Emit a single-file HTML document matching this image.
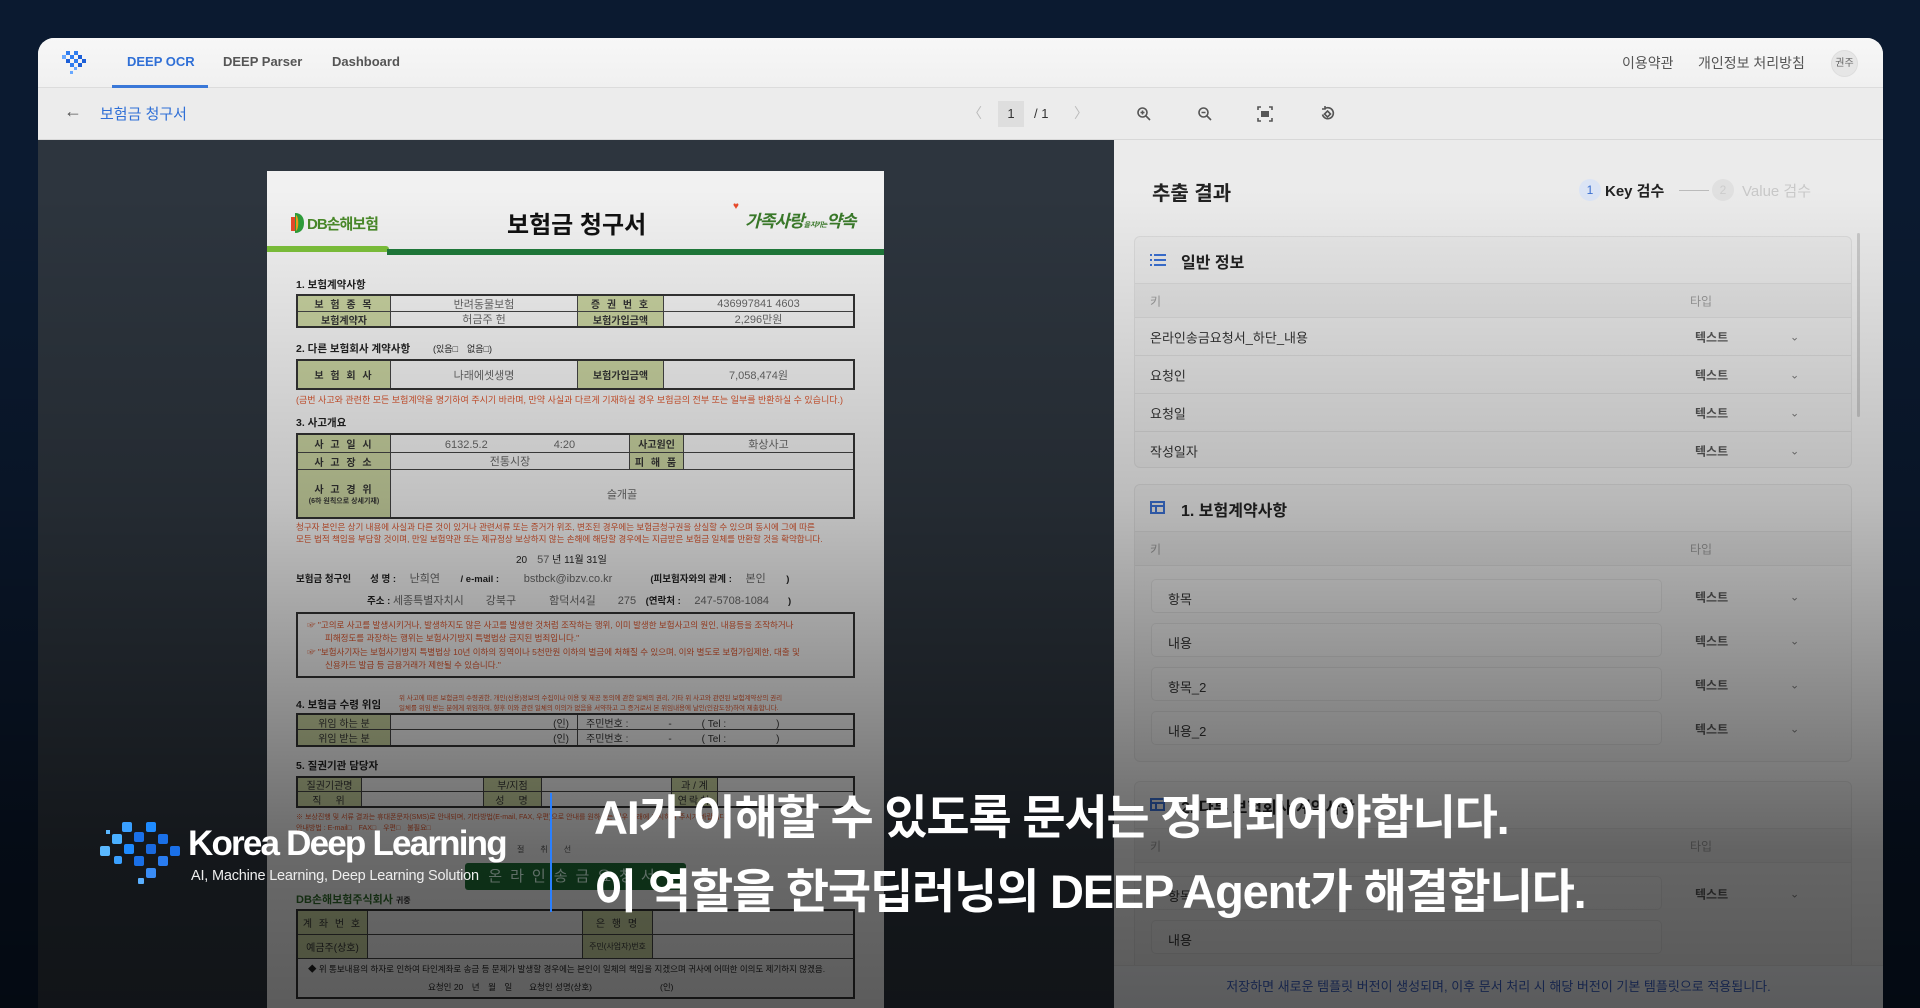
<!DOCTYPE html>
<html><head><meta charset="utf-8">
<style>
*{margin:0;padding:0;box-sizing:border-box}
html{overflow:hidden;height:1008px}
body{width:1920px;height:1008px;overflow:hidden;background:#0b1a30;font-family:"Liberation Sans","Noto Sans CJK KR",sans-serif;position:relative}
.abs{position:absolute}
.card{position:absolute;left:38px;top:38px;width:1845px;height:970px;background:#f3f3f3;border-radius:16px 16px 0 0;overflow:hidden}
.nav{position:absolute;left:0;top:0;width:100%;height:50px;border-bottom:1px solid #dcdcdc;background:linear-gradient(#f7f7f7,#f0f0f0)}
.nav .t{position:absolute;top:16px;font-size:13px;font-weight:bold;color:#555}
.tool{position:absolute;left:0;top:50px;width:100%;height:52px;background:#ececec;border-bottom:1px solid #d8d8d8}
.left{position:absolute;left:0;top:102px;width:1076px;height:868px;background:#2d353e;overflow:hidden}
.right{position:absolute;left:1076px;top:102px;width:769px;height:868px;background:#ebebeb;overflow:hidden}
.paper{position:absolute;left:229px;top:31px;width:617px;height:837px;background:#f1f1f1;overflow:hidden;color:#222}
.p{position:absolute;white-space:nowrap}
.sec{font-size:10.5px;font-weight:bold;color:#222}
.tbl{position:absolute;border:2px solid #333}
.c{position:absolute;border-right:1px solid #444;border-bottom:1px solid #444;font-size:10px;display:flex;align-items:center;justify-content:center;color:#333;white-space:nowrap}
.lb{background:#c7d19f;font-weight:bold;letter-spacing:2px}
.hw{color:#666;font-size:11px}
.red{color:#d9552e;font-size:9px}
.rc{position:absolute;left:20px;width:718px;background:#e7e7e7;border:1px solid #dadada;border-radius:6px;overflow:hidden}
.row{position:absolute;left:0;width:100%;border-top:1px solid #d8d8d8;font-size:13px;color:#333}
.row .k{position:absolute;left:15px;top:50%;transform:translateY(-50%)}
.row .ty{position:absolute;left:560px;top:50%;transform:translateY(-50%);font-size:12px;font-weight:bold;color:#555}
.row .ch{position:absolute;left:655px;top:50%;transform:translateY(-50%);font-size:11px;color:#777}
.inp{position:absolute;left:16px;width:511px;height:34px;border:1px solid #d9d9d9;border-radius:5px;background:#e9e9e9;font-size:13px;color:#333;padding:9px 0 0 16px}
.overlay{position:absolute;left:0;top:0;width:1920px;height:1008px;background:linear-gradient(to bottom,rgba(0,0,0,0) 0px,rgba(0,0,0,0) 190px,rgba(0,0,0,0.2) 500px,rgba(0,0,0,0.56) 850px,rgba(0,0,0,0.62) 1008px)}
.cap{position:absolute;color:#fff;font-weight:bold;white-space:nowrap;font-family:"Liberation Sans","Noto Sans CJK KR",sans-serif}
</style></head><body>
<div class="card">
  <div class="nav">
    <svg class="abs" style="left:22px;top:13px" width="30" height="26" viewBox="0 0 30 26">
      <g fill="#2f7df0"><rect x="6" y="0" width="4" height="4"/><rect x="14" y="0" width="4" height="4"/><rect x="2" y="4" width="4" height="4" fill="#68a8ff"/><rect x="10" y="4" width="4" height="4"/><rect x="18" y="4" width="4" height="4" fill="#1c5fd8"/><rect x="6" y="8" width="4" height="4" fill="#1c5fd8"/><rect x="14" y="8" width="4" height="4"/><rect x="22" y="8" width="4" height="4" fill="#1c5fd8"/><rect x="10" y="12" width="4" height="4"/><rect x="18" y="12" width="4" height="4" fill="#1c5fd8"/><rect x="14" y="16" width="3" height="3" fill="#68a8ff"/><rect x="10" y="20" width="3" height="3" fill="#68a8ff"/></g>
    </svg>
    <div class="t" style="left:89px;color:#2f6fd6">DEEP OCR</div>
    <div class="abs" style="left:74px;top:47px;width:96px;height:3px;background:#3a78d8"></div>
    <div class="t" style="left:185px">DEEP Parser</div>
    <div class="t" style="left:294px">Dashboard</div>
    <div class="t" style="left:1584px;font-weight:normal;color:#555;font-size:14px;top:15px">이용약관</div>
    <div class="t" style="left:1660px;font-weight:normal;color:#555;font-size:14px;top:15px">개인정보 처리방침</div>
    <div class="abs" style="left:1793px;top:12px;width:27px;height:27px;border-radius:50%;background:#e6e6e6;border:1px solid #ddd;font-size:10px;color:#666;text-align:center;line-height:25px">권주</div>
  </div>
  <div class="tool">
    <div class="abs" style="left:26px;top:13px;font-size:18px;color:#555">←</div>
    <div class="abs" style="left:62px;top:15px;font-size:15px;color:#2f6fd6">보험금 청구서</div>
    <div class="abs" style="left:930px;top:15px;font-size:14px;color:#bbb">〈</div>
    <div class="abs" style="left:960px;top:13px;width:26px;height:26px;background:#dedede;font-size:13px;color:#333;text-align:center;line-height:26px">1</div>
    <div class="abs" style="left:996px;top:18px;font-size:13px;color:#333">/ 1</div>
    <div class="abs" style="left:1036px;top:15px;font-size:14px;color:#bbb">〉</div>
    <svg class="abs" style="left:1098px;top:18px" width="16" height="16" viewBox="0 0 16 16" fill="none" stroke="#555" stroke-width="1.6"><circle cx="6.5" cy="6.5" r="4.5"/><path d="M10 10l4 4M4.5 6.5h4M6.5 4.5v4"/></svg>
    <svg class="abs" style="left:1159px;top:18px" width="16" height="16" viewBox="0 0 16 16" fill="none" stroke="#555" stroke-width="1.6"><circle cx="6.5" cy="6.5" r="4.5"/><path d="M10 10l4 4M4.5 6.5h4"/></svg>
    <svg class="abs" style="left:1219px;top:18px" width="16" height="16" viewBox="0 0 16 16" fill="none" stroke="#555" stroke-width="1.6"><path d="M1 4V1h3M12 1h3v3M15 12v3h-3M4 15H1v-3"/><rect x="4" y="5" width="8" height="6" fill="#555" stroke="none"/></svg>
    <svg class="abs" style="left:1281px;top:17px" width="17" height="17" viewBox="0 0 17 17" fill="none" stroke="#555" stroke-width="1.6"><path d="M6 3.5a5.5 5.5 0 1 1-2.5 6"/><path d="M6 1v3H3"/><path d="M8.5 6l3 3-3 3-3-3z"/></svg>
  </div>
  <div class="left">
    <div class="paper">
      <svg class="abs" style="left:24px;top:40px" width="14" height="24" viewBox="0 0 14 24"><path d="M0 6h5v14H0z" fill="#e84a2a"/><path d="M4 2c6 0 9 4 9 10s-3 10-9 10z" fill="#2e9e3a"/><path d="M5 4c3 2 3 14 0 16z" fill="#f59a1a"/></svg>
      <div class="p" style="left:40px;top:42px;font-size:15px;font-weight:bold;color:#4a8a2a;letter-spacing:-1px">DB손해보험</div>
      <div class="p" style="left:240px;top:34px;font-size:24px;font-weight:bold;color:#111">보험금 청구서</div>
      <div class="p" style="left:478px;top:36px;font-size:17px;font-weight:bold;color:#3a7a2a;font-style:italic;letter-spacing:-1px">가족사랑<span style="font-size:7px">을 지키는</span>약속</div>
      <div class="abs" style="left:466px;top:30px;color:#e84a2a;font-size:10px">♥</div>
      <div class="abs" style="left:0;top:75px;width:122px;height:6px;background:#7dc13a;border-radius:0 3px 3px 0"></div>
      <div class="abs" style="left:120px;top:78px;width:500px;height:6px;background:#1f7a3a"></div>

      <div class="p sec" style="left:29px;top:106px">1. 보험계약사항</div>
      <div class="tbl" style="left:29px;top:123px;width:559px;height:34px">
        <div class="c lb" style="left:0;top:0;width:93px;height:16px">보 험 종 목</div>
        <div class="c hw" style="left:93px;top:0;width:187px;height:16px">반려동물보험</div>
        <div class="c lb" style="left:280px;top:0;width:86px;height:16px">증 권 번 호</div>
        <div class="c hw" style="left:366px;top:0;width:189px;height:16px;border-right:0">436997841 4603</div>
        <div class="c lb" style="left:0;top:16px;width:93px;height:14px;border-bottom:0;letter-spacing:0">보험계약자</div>
        <div class="c hw" style="left:93px;top:16px;width:187px;height:14px;border-bottom:0">허금주 헌</div>
        <div class="c lb" style="left:280px;top:16px;width:86px;height:14px;border-bottom:0;letter-spacing:0">보험가입금액</div>
        <div class="c hw" style="left:366px;top:16px;width:189px;height:14px;border:0">2,296만원</div>
      </div>
      <div class="p sec" style="left:29px;top:170px">2. 다른 보험회사 계약사항 <span style="font-weight:normal;font-size:9px;margin-left:20px">(있음□　없음□)</span></div>
      <div class="tbl" style="left:29px;top:188px;width:559px;height:31px">
        <div class="c lb" style="left:0;top:0;width:93px;height:27px;border-bottom:0">보 험 회 사</div>
        <div class="c hw" style="left:93px;top:0;width:187px;height:27px;border-bottom:0">나래에셋생명</div>
        <div class="c lb" style="left:280px;top:0;width:86px;height:27px;border-bottom:0;letter-spacing:0">보험가입금액</div>
        <div class="c hw" style="left:366px;top:0;width:189px;height:27px;border:0">7,058,474원</div>
      </div>
      <div class="p red" style="left:29px;top:222px">(금번 사고와 관련한 모든 보험계약을 명기하여 주시기 바라며, 만약 사실과 다르게 기재하실 경우 보험금의 전부 또는 일부를 반환하실 수 있습니다.)</div>
      <div class="p sec" style="left:29px;top:244px">3. 사고개요</div>
      <div class="tbl" style="left:29px;top:262px;width:559px;height:86px">
        <div class="c lb" style="left:0;top:0;width:93px;height:18px">사 고 일 시</div>
        <div class="c hw" style="left:93px;top:0;width:239px;height:18px">6132.5.2　　　　　　4:20</div>
        <div class="c lb" style="left:332px;top:0;width:54px;height:18px;letter-spacing:0">사고원인</div>
        <div class="c hw" style="left:386px;top:0;width:169px;height:18px;border-right:0">화상사고</div>
        <div class="c lb" style="left:0;top:18px;width:93px;height:17px">사 고 장 소</div>
        <div class="c hw" style="left:93px;top:18px;width:239px;height:17px">전통시장</div>
        <div class="c lb" style="left:332px;top:18px;width:54px;height:17px">피 해 품</div>
        <div class="c" style="left:386px;top:18px;width:169px;height:17px;border-right:0"></div>
        <div class="c lb" style="left:0;top:35px;width:93px;height:47px;border-bottom:0;flex-direction:column">사 고 경 위<span style="font-size:7px;letter-spacing:0">(6하 원칙으로 상세기재)</span></div>
        <div class="c hw" style="left:93px;top:35px;width:462px;height:47px;border:0">슬개골</div>
      </div>
      <div class="p red" style="left:29px;top:350px;font-size:8.5px">청구자 본인은 상기 내용에 사실과 다른 것이 있거나 관련서류 또는 증거가 위조, 변조된 경우에는 보험금청구권을 상실할 수 있으며 동시에 그에 따른</div>
      <div class="p red" style="left:29px;top:362px;font-size:8.5px">모든 법적 책임을 부담할 것이며, 만일 보험약관 또는 제규정상 보상하지 않는 손해에 해당할 경우에는 지급받은 보험금 일체를 반환할 것을 확약합니다.</div>
      <div class="p" style="left:249px;top:380px;font-size:10px">20　<span class="hw">57</span> 년 11월 31일</div>
      <div class="p" style="left:29px;top:399px;font-size:9.5px;font-weight:bold">보험금 청구인　　성 명 : <span class="hw" style="font-weight:normal">　난희연　</span>　/ e-mail : <span class="hw" style="font-weight:normal">　　bstbck@ibzv.co.kr</span>　　　　(피보험자와의 관계 : <span class="hw" style="font-weight:normal">　본인　</span>　)</div>
      <div class="p" style="left:100px;top:421px;font-size:9.5px;font-weight:bold">주소 : <span class="hw" style="font-weight:normal">세종특별자치시　　강북구　　　함덕서4길　　275</span>　(연락처 : <span class="hw" style="font-weight:normal">　247-5708-1084</span>　　)</div>
      <div class="abs" style="left:29px;top:441px;width:559px;height:66px;border:2px solid #333"></div>
      <div class="p red" style="left:40px;top:448px;font-size:8.5px">☞ "고의로 사고를 발생시키거나, 발생하지도 않은 사고를 발생한 것처럼 조작하는 행위, 이미 발생한 보험사고의 원인, 내용등을 조작하거나</div>
      <div class="p red" style="left:58px;top:461px;font-size:8.5px">피해정도를 과장하는 행위는 보험사기방지 특별법상 금지된 범죄입니다."</div>
      <div class="p red" style="left:40px;top:475px;font-size:8.5px">☞ "보험사기자는 보험사기방지 특별법상 10년 이하의 징역이나 5천만원 이하의 벌금에 처해질 수 있으며, 이와 별도로 보험가입제한, 대출 및</div>
      <div class="p red" style="left:58px;top:488px;font-size:8.5px">신용카드 발급 등 금융거래가 제한될 수 있습니다."</div>
      <div class="p sec" style="left:29px;top:526px">4. 보험금 수령 위임</div>
      <div class="p red" style="left:132px;top:521px;font-size:6.5px">위 사고에 따른 보험금의 수령권한, 개인(신용)정보의 수집이나 이용 및 제공 동의에 관한 일체의 권리, 기타 위 사고와 관련된 보험계약상의 권리</div>
      <div class="p red" style="left:132px;top:531px;font-size:6.5px">일체를 위임 받는 분에게 위임하며, 향후 이와 관련 일체의 이의가 없음을 서약하고 그 증거로서 본 위임내용에 날인(인감도장)하여 제출합니다.</div>
      <div class="tbl" style="left:29px;top:542px;width:559px;height:34px">
        <div class="c lb" style="left:0;top:0;width:93px;height:15px;letter-spacing:0;font-weight:normal">위임 하는 분</div>
        <div class="c" style="left:93px;top:0;width:187px;height:15px;justify-content:flex-end;padding-right:8px">(인)</div>
        <div class="c" style="left:280px;top:0;width:275px;height:15px;border-right:0;justify-content:flex-start;padding-left:8px">주민번호 :　　　　-　　　( Tel :　　　　　)</div>
        <div class="c lb" style="left:0;top:15px;width:93px;height:15px;letter-spacing:0;font-weight:normal;border-bottom:0">위임 받는 분</div>
        <div class="c" style="left:93px;top:15px;width:187px;height:15px;justify-content:flex-end;padding-right:8px;border-bottom:0">(인)</div>
        <div class="c" style="left:280px;top:15px;width:275px;height:15px;border:0;justify-content:flex-start;padding-left:8px">주민번호 :　　　　-　　　( Tel :　　　　　)</div>
      </div>
      <div class="p sec" style="left:29px;top:587px">5. 질권기관 담당자</div>
      <div class="tbl" style="left:29px;top:605px;width:559px;height:32px">
        <div class="c lb" style="left:0;top:0;width:64px;height:14px;letter-spacing:0;font-weight:normal">질권기관명</div>
        <div class="c" style="left:64px;top:0;width:122px;height:14px"></div>
        <div class="c lb" style="left:186px;top:0;width:58px;height:14px;letter-spacing:0;font-weight:normal">부/지점</div>
        <div class="c" style="left:244px;top:0;width:130px;height:14px"></div>
        <div class="c lb" style="left:374px;top:0;width:46px;height:14px;letter-spacing:0;font-weight:normal">과 / 계</div>
        <div class="c" style="left:420px;top:0;width:135px;height:14px;border-right:0"></div>
        <div class="c lb" style="left:0;top:14px;width:64px;height:14px;font-weight:normal;border-bottom:0">직　위</div>
        <div class="c" style="left:64px;top:14px;width:122px;height:14px;border-bottom:0"></div>
        <div class="c lb" style="left:186px;top:14px;width:58px;height:14px;font-weight:normal;border-bottom:0">성　명</div>
        <div class="c" style="left:244px;top:14px;width:130px;height:14px;border-bottom:0"></div>
        <div class="c lb" style="left:374px;top:14px;width:46px;height:14px;font-weight:normal;border-bottom:0">연락처</div>
      </div>
      <div class="p red" style="left:29px;top:641px;font-size:7px">※ 보상진행 및 서류 결과는 휴대폰문자(SMS)로 안내되며, 기타방법(E-mail, FAX, 우편)으로 안내를 원하시는 경우 아래에 표시하여 주시기 바랍니다.</div>
      <div class="p red" style="left:29px;top:652px;font-size:7px">안내방법 : E-mail□　FAX□　우편□　불필요□</div>
      <div class="p" style="left:250px;top:673px;font-size:8px;color:#555">절　　취　　선</div>
      <div class="abs" style="left:198px;top:692px;width:221px;height:27px;background:#1f6e36;border-radius:3px;color:#dfe;font-size:15px;text-align:center;line-height:27px;letter-spacing:8px">온라인송금요청서</div>
      <div class="p" style="left:29px;top:720px;font-size:11px;font-weight:bold;color:#2f6a2a">DB손해보험주식회사 <span style="font-size:8px;color:#333">귀중</span></div>
      <div class="tbl" style="left:29px;top:738px;width:559px;height:90px">
        <div class="c lb" style="left:0;top:0;width:70px;height:24px;font-weight:normal">계 좌 번 호</div>
        <div class="c" style="left:70px;top:0;width:215px;height:24px"></div>
        <div class="c lb" style="left:285px;top:0;width:70px;height:24px;font-weight:normal">은 행 명</div>
        <div class="c" style="left:355px;top:0;width:200px;height:24px;border-right:0"></div>
        <div class="c lb" style="left:0;top:24px;width:70px;height:24px;font-weight:normal;letter-spacing:0">예금주(상호)</div>
        <div class="c" style="left:70px;top:24px;width:215px;height:24px"></div>
        <div class="c lb" style="left:285px;top:24px;width:70px;height:24px;font-weight:normal;letter-spacing:0;font-size:8px">주민(사업자)번호</div>
        <div class="c" style="left:355px;top:24px;width:200px;height:24px;border-right:0"></div>
        <div class="p" style="left:10px;top:52px;font-size:8.5px">◆ 위 통보내용의 하자로 인하여 타인계좌로 송금 등 문제가 발생할 경우에는 본인이 일체의 책임을 지겠으며 귀사에 어떠한 이의도 제기하지 않겠음.</div>
        <div class="p" style="left:130px;top:70px;font-size:8.5px">요청인 20　년　월　일　　요청인 성명(상호)　　　　　　　　(인)</div>
      </div>
    </div>
  </div>
  <div class="right">
    <div class="abs" style="left:38px;top:37px;font-size:20px;font-weight:bold;color:#222">추출 결과</div>
    <div class="abs" style="left:465px;top:39px;width:22px;height:22px;border-radius:50%;background:#dbe4f5;color:#3a6fd0;font-size:12px;text-align:center;line-height:22px">1</div>
    <div class="abs" style="left:491px;top:40px;font-size:15px;color:#222;font-weight:bold">Key 검수</div>
    <div class="abs" style="left:565px;top:50px;width:30px;height:1px;background:#bbb"></div>
    <div class="abs" style="left:598px;top:39px;width:22px;height:22px;border-radius:50%;background:#e0e0e0;color:#ccc;font-size:12px;text-align:center;line-height:22px">2</div>
    <div class="abs" style="left:628px;top:40px;font-size:15px;color:#c8c8c8">Value 검수</div>
    <div class="abs" style="left:743px;top:93px;width:3px;height:184px;background:#c9c9c9;border-radius:2px"></div>

    <div class="rc" style="top:96px;height:232px">
      <svg class="abs" style="left:15px;top:17px" width="16" height="12" viewBox="0 0 16 12" fill="#3a6fd0"><rect x="0" y="0" width="2" height="2"/><rect x="4" y="0" width="12" height="2"/><rect x="0" y="5" width="2" height="2"/><rect x="4" y="5" width="12" height="2"/><rect x="0" y="10" width="2" height="2"/><rect x="4" y="10" width="12" height="2"/></svg>
      <div class="abs" style="left:46px;top:12px;font-size:16px;font-weight:bold;color:#222">일반 정보</div>
      <div class="row" style="top:46px;height:34px;background:#e2e2e2;color:#999;font-size:12px"><span class="k">키</span><span class="abs" style="left:555px;top:50%;transform:translateY(-50%)">타입</span></div>
      <div class="row" style="top:80px;height:38px"><span class="k">온라인송금요청서_하단_내용</span><span class="ty">텍스트</span><span class="ch">⌄</span></div>
      <div class="row" style="top:118px;height:38px"><span class="k">요청인</span><span class="ty">텍스트</span><span class="ch">⌄</span></div>
      <div class="row" style="top:156px;height:38px"><span class="k">요청일</span><span class="ty">텍스트</span><span class="ch">⌄</span></div>
      <div class="row" style="top:194px;height:38px"><span class="k">작성일자</span><span class="ty">텍스트</span><span class="ch">⌄</span></div>
    </div>

    <div class="rc" style="top:344px;height:278px">
      <svg class="abs" style="left:15px;top:16px" width="15" height="13" viewBox="0 0 15 13" fill="none" stroke="#3a6fd0" stroke-width="2"><rect x="1" y="1" width="13" height="11"/><path d="M1 5h13M6 5v7"/></svg>
      <div class="abs" style="left:46px;top:12px;font-size:16px;font-weight:bold;color:#222">1. 보험계약사항</div>
      <div class="row" style="top:46px;height:34px;background:#e2e2e2;color:#999;font-size:12px"><span class="k">키</span><span class="abs" style="left:555px;top:50%;transform:translateY(-50%)">타입</span></div>
      <div class="row" style="top:80px;height:198px">
        <div class="inp" style="top:13px">항목</div><span class="ty" style="top:31px">텍스트</span><span class="ch" style="top:31px">⌄</span>
        <div class="inp" style="top:57px">내용</div><span class="ty" style="top:75px">텍스트</span><span class="ch" style="top:75px">⌄</span>
        <div class="inp" style="top:101px">항목_2</div><span class="ty" style="top:119px">텍스트</span><span class="ch" style="top:119px">⌄</span>
        <div class="inp" style="top:145px">내용_2</div><span class="ty" style="top:163px">텍스트</span><span class="ch" style="top:163px">⌄</span>
      </div>
    </div>

    <div class="rc" style="top:641px;height:220px">
      <svg class="abs" style="left:15px;top:16px" width="15" height="13" viewBox="0 0 15 13" fill="none" stroke="#3a6fd0" stroke-width="2"><rect x="1" y="1" width="13" height="11"/><path d="M1 5h13M6 5v7"/></svg>
      <div class="abs" style="left:46px;top:12px;font-size:16px;font-weight:bold;color:#222">2. 다른 보험회사 계약사항</div>
      <div class="row" style="top:46px;height:34px;background:#e2e2e2;color:#999;font-size:12px"><span class="k">키</span><span class="abs" style="left:555px;top:50%;transform:translateY(-50%)">타입</span></div>
      <div class="row" style="top:80px;height:138px">
        <div class="inp" style="top:13px">항목</div><span class="ty" style="top:31px">텍스트</span><span class="ch" style="top:31px">⌄</span>
        <div class="inp" style="top:57px">내용</div>
      </div>
    </div>
    <div class="abs" style="left:0;top:825px;width:769px;height:43px;background:#eef0f3;border-top:1px solid #ddd"></div>
    <div class="abs" style="left:0;top:836px;width:769px;text-align:center;font-size:13px;color:#3a5fc0">저장하면 새로운 템플릿 버전이 생성되며, 이후 문서 처리 시 해당 버전이 기본 템플릿으로 적용됩니다.</div>
  </div>
</div>

<div class="overlay"></div>

<svg class="abs" style="left:100px;top:820px" width="84" height="66" viewBox="0 0 84 66">
  <g fill="#1e8bff">
    <rect x="22" y="2" width="10" height="10" rx="2" fill="#3aa0ff"/><rect x="46" y="2" width="10" height="10" rx="2"/>
    <rect x="6" y="10" width="4" height="4" fill="#5ab8ff"/>
    <rect x="12" y="14" width="10" height="10" rx="2" fill="#4ab0ff"/><rect x="34" y="12" width="10" height="10" rx="2" fill="#1a70e8"/><rect x="58" y="14" width="10" height="10" rx="2" fill="#1a70e8"/>
    <rect x="0" y="26" width="10" height="10" rx="2" fill="#5ab8ff"/><rect x="24" y="24" width="10" height="10" rx="2"/><rect x="46" y="24" width="10" height="10" rx="2" fill="#1a6ae0"/><rect x="70" y="26" width="10" height="10" rx="2" fill="#1a70e8"/>
    <rect x="14" y="36" width="8" height="8" rx="2" fill="#3aa0ff"/><rect x="34" y="36" width="10" height="10" rx="2" fill="#1a70e8"/><rect x="58" y="36" width="10" height="10" rx="2" fill="#2a7cf0"/>
    <rect x="46" y="48" width="10" height="10" rx="2" fill="#3a8cf5"/><rect x="38" y="58" width="6" height="6" rx="1" fill="#5ab0ff"/>
  </g>
</svg>
<div class="cap" style="left:188px;top:824px;font-size:35px;letter-spacing:-1.8px;font-weight:bold">Korea Deep Learning</div>
<div class="cap" style="left:191px;top:868px;font-size:14.5px;font-weight:normal;letter-spacing:-0.2px;color:#eee">AI, Machine Learning, Deep Learning Solution</div>
<div class="abs" style="left:550px;top:793px;width:2px;height:119px;background:#2a80ff"></div>
<div class="cap" style="left:594px;top:779px;font-size:47px;letter-spacing:-1.2px">AI가 이해할 수 있도록 문서는 정리되어야합니다.</div>
<div class="cap" style="left:594px;top:853px;font-size:47px;letter-spacing:-1.2px">이 역할을 한국딥러닝의 DEEP Agent가 해결합니다.</div>
</body></html>
